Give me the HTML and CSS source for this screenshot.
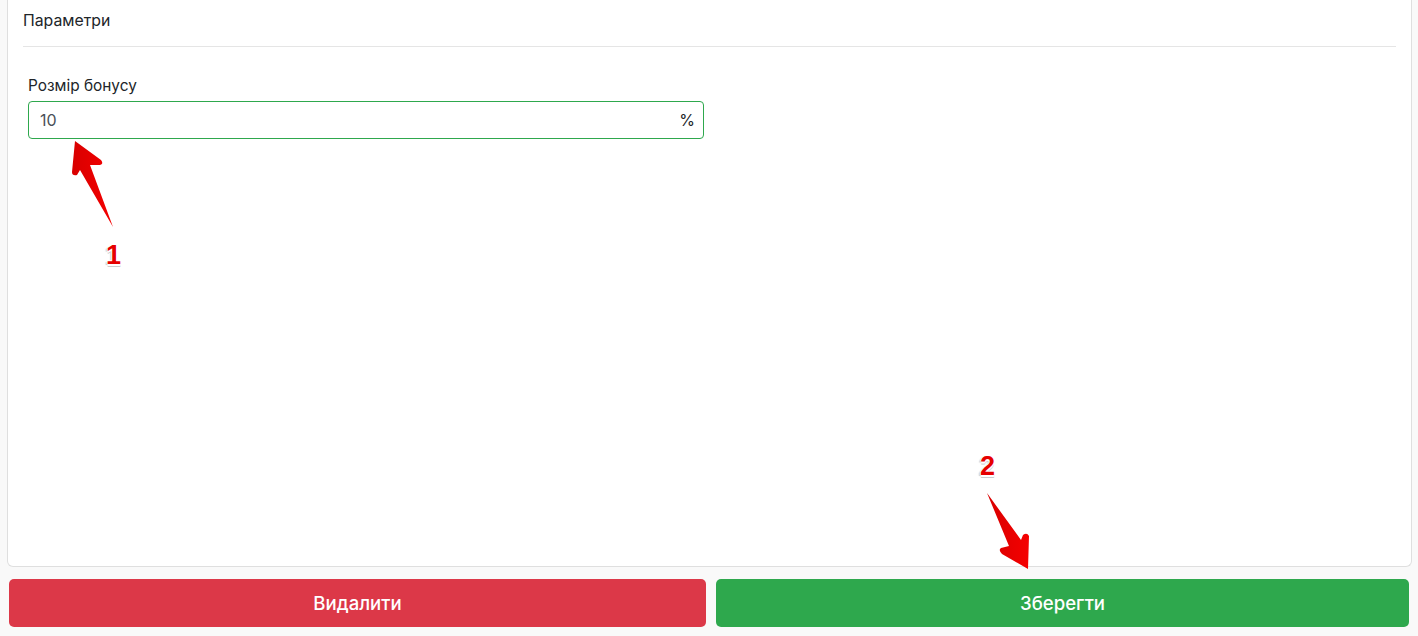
FILE: index.html
```html
<!DOCTYPE html>
<html>
<head>
  <meta charset="utf-8">
  <link rel="stylesheet" href="styles.css">
</head>
<body>
  <div class="page">
    <div class="card">
      <div class="card-title">Параметри</div>
      <div class="field">
        <label class="field-label">Розмір бонусу</label>
        <div class="input-box">
          <span class="input-value">10</span>
          <span class="input-unit">%</span>
        </div>
      </div>
    </div>
    <div class="actions">
      <button class="btn btn-delete">Видалити</button>
      <button class="btn btn-save">Зберегти</button>
    </div>

    <!-- annotation arrows drawn over the screenshot -->
    <svg class="arrows" width="1418" height="636" viewBox="0 0 1418 636">
      <defs>
        <linearGradient id="arrowFill" x1="0" y1="0" x2="1" y2="0">
          <stop offset="0" stop-color="#d80000"/>
          <stop offset="1" stop-color="#f50000"/>
        </linearGradient>
      </defs>
      <path class="arrow" d="M75 141 L101 160 Q104 164 100 165 L90 165 L113 227 L80 170 L77 175 Q72 176 72 172 Z"/>
      <path class="arrow" d="M987 493 L1021 540 L1023 535 Q1027 532 1029 536 L1028 569 L1002 554 Q998 550 1001 548 L1009 546 Z"/>
    </svg>
    <span class="mark mark-one">1</span>
    <span class="mark mark-two">2</span>
  </div>
</body>
</html>
```

FILE: styles.css
```css
* {
  box-sizing: border-box;
}
body {
  margin: 0;
  background-color: #f9f9f9;
  font-family: Inter, Roboto, "Noto Sans", sans-serif;
  color: #212529;
}
.page {
  position: relative;
  display: flex;
  flex-direction: column;
  height: 636px;
  overflow: hidden;
  padding: 0 6px 9px 7px;
}
.card {
  flex: 1;
  background-color: #fff;
  border: 1px solid #dfdfdf;
  border-top: 0;
  border-radius: 0 0 6px 6px;
  padding: 0 15px;
}
.card-title {
  height: 47px;
  padding-top: 11px;
  font-size: 15.8px;
  line-height: 20px;
  border-bottom: 1px solid #e5e5e5;
}
.field {
  width: 681px;
  padding: 29px 0 0 5px;
}
.field-label {
  display: block;
  font-size: 15.4px;
  line-height: 20px;
  margin-bottom: 5px;
}
.input-box {
  display: flex;
  justify-content: space-between;
  align-items: center;
  height: 38px;
  padding: 0 8px 0 11px;
  border: 1px solid #2ea84d;
  border-radius: 4px;
  font-size: 16px;
}
.input-value {
  color: #495057;
}
.actions {
  display: flex;
  gap: 10px;
  margin: 12px 3px 0 2px;
}
.btn {
  height: 48px;
  border: 0;
  border-radius: 5px;
  color: #fff;
  font-family: inherit;
  font-size: 18.6px;
  font-weight: 500;
}
.btn-delete {
  flex: 697;
  background-color: #dc3848;
}
.btn-save {
  flex: 693;
  background-color: #2ea84d;
}
.arrows {
  position: absolute;
  top: 0;
  left: 0;
  pointer-events: none;
}
.arrow {
  fill: url(#arrowFill);
}
.mark {
  position: absolute;
  font-family: "Liberation Sans", Arial, sans-serif;
  font-size: 27px;
  font-weight: 700;
  line-height: 30px;
  color: #e60000;
  text-shadow: -1px 0 0 #fff, 1px 0 0 #fff, 0 -1px 0 #fff, 0 1px 0 #fff, 0 2px 0 #fff, -2px 1px 1px #ccc, 0 3px 0 #ccc;
}
.mark-one {
  left: 106px;
  top: 240px;
}
.mark-two {
  left: 980px;
  top: 451px;
}
```
